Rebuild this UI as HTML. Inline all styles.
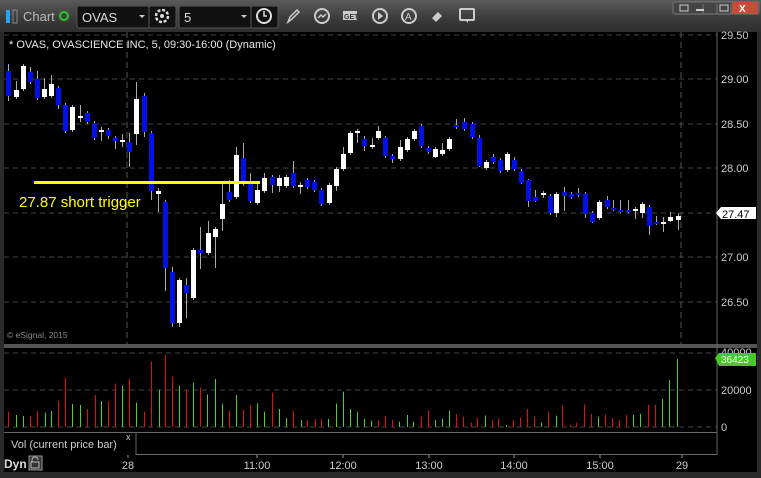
<!DOCTYPE html>
<html><head><meta charset="utf-8"><style>
html,body{margin:0;padding:0;background:#1a1a1a;}
body{width:761px;height:478px;overflow:hidden;position:relative;font-family:"Liberation Sans",Arial,sans-serif;}
.tb{position:absolute;left:0;top:0;width:761px;height:32px;background:linear-gradient(#5a5a5a,#3a3a3a 60%,#2e2e2e);}
</style></head><body>
<div class="tb"></div>
<svg width="761" height="478" style="position:absolute;left:0;top:0" id="s">
<rect x="6" y="10" width="4" height="13" fill="#29a3f0"/>
<rect x="13" y="10" width="4" height="13" fill="none" stroke="#888" stroke-width="1"/>
<text x="23" y="21" fill="#bbb" font-size="13" font-family="Liberation Sans">Chart</text>
<circle cx="64" cy="16" r="4" fill="none" stroke="#2c2" stroke-width="2"/>
<rect x="77" y="6" width="72" height="22" rx="2" fill="#111" stroke="#555"/>
<text x="82" y="22" fill="#ddd" font-size="13" font-family="Liberation Sans">OVAS</text>
<path d="M139 15l3 3 3-3z" fill="#ccc"/>
<rect x="149" y="6" width="27" height="22" rx="2" fill="#111" stroke="#555"/>
<circle cx="162" cy="16" r="6" fill="none" stroke="#ddd" stroke-width="2.5" stroke-dasharray="3 1.7"/>
<circle cx="162" cy="16" r="2" fill="#ddd"/>
<rect x="179" y="6" width="72" height="22" rx="2" fill="#111" stroke="#555"/>
<text x="184" y="22" fill="#ddd" font-size="13" font-family="Liberation Sans">5</text>
<path d="M241 15l3 3 3-3z" fill="#ccc"/>
<rect x="251" y="6" width="27" height="22" rx="2" fill="#111" stroke="#555"/>
<circle cx="264" cy="16" r="7" fill="none" stroke="#ddd" stroke-width="2"/>
<path d="M264 11v5h3" stroke="#ddd" stroke-width="1.5" fill="none"/>
<path d="M288 22l2-5 7-7 2 2-7 7z" fill="none" stroke="#ccc" stroke-width="1.5"/>
<circle cx="322" cy="16" r="7" fill="none" stroke="#ccc" stroke-width="2"/>
<path d="M318 18l3-3 2 2 3-3" stroke="#ccc" stroke-width="1.5" fill="none"/>
<rect x="343" y="11" width="14" height="9" fill="#ccc"/><text x="344" y="19" font-size="7" fill="#333" font-weight="bold">GET</text>
<circle cx="380" cy="16" r="7" fill="none" stroke="#ccc" stroke-width="2"/><path d="M378 12l5 4-5 4z" fill="#ccc"/>
<circle cx="409" cy="16" r="7" fill="none" stroke="#ccc" stroke-width="2"/><text x="405" y="20" font-size="10" fill="#ccc">A</text>
<path d="M432 18l6-6 4 4-6 6z" fill="#ccc"/>
<rect x="460" y="9" width="14" height="11" rx="1" fill="none" stroke="#ccc" stroke-width="2"/><path d="M465 20l3 3v-3" fill="#ccc"/>
<rect x="673" y="2" width="86" height="12" rx="2" fill="#444" stroke="#777"/>
<rect x="732" y="2" width="26" height="12" fill="#c0503a"/>
<text x="739" y="12" font-size="10" fill="#fff" font-weight="bold">X</text>
<path d="M703 4v10M717 4v10M731 4v10" stroke="#777"/>
<rect x="680" y="5" width="8" height="6" fill="none" stroke="#ccc"/><path d="M696 10h8" stroke="#ccc" stroke-width="2"/><rect x="720" y="5" width="8" height="6" fill="none" stroke="#ccc"/>
<rect x="4" y="32" width="753" height="312" fill="#000"/>
<rect x="0" y="32" width="4" height="446" fill="#2a2a2a"/>
<rect x="757" y="32" width="4" height="446" fill="#2a2a2a"/>
<rect x="4" y="344" width="753" height="4" fill="#555"/>
<rect x="4" y="348" width="753" height="124" fill="#000"/>
<rect x="0" y="472" width="761" height="6" fill="#2a2a2a"/>
<line x1="717" y1="32" x2="717" y2="455" stroke="#666"/>
<g stroke="#444" stroke-dasharray="5 4">
<line x1="4" y1="35" x2="717" y2="35"/><line x1="4" y1="79" x2="717" y2="79"/><line x1="4" y1="124" x2="717" y2="124"/><line x1="4" y1="168" x2="717" y2="168"/><line x1="4" y1="213" x2="717" y2="213"/><line x1="4" y1="257" x2="717" y2="257"/><line x1="4" y1="302" x2="717" y2="302"/>
<line x1="4" y1="353" x2="717" y2="353"/><line x1="4" y1="390" x2="717" y2="390"/><line x1="4" y1="427" x2="717" y2="427"/>
</g>
<g stroke="#555" stroke-dasharray="6 4"><line x1="127" y1="32" x2="127" y2="344"/><line x1="681" y1="32" x2="681" y2="344"/></g>
<g id="c"></g>
<g id="v"></g>
<rect x="34" y="181" width="226" height="3" fill="#ffff00"/>
<g font-size="11" fill="#ccc" font-family="Liberation Sans">
<text x="721" y="39">29.50</text><text x="721" y="83">29.00</text><text x="721" y="128">28.50</text><text x="721" y="172">28.00</text><text x="721" y="261">27.00</text><text x="721" y="306">26.50</text>
<text x="721" y="356">40000</text><text x="721" y="394">20000</text><text x="721" y="431">0</text>
</g>
<path d="M716 213l5-6h35v12h-35z" fill="#fff"/>
<text x="722" y="218" font-size="11" fill="#000" font-family="Liberation Sans">27.47</text>
<path d="M715 358l4-5h37v13h-37z" fill="#44cc22"/>
<text x="721" y="363" font-size="10" fill="#fff" font-family="Liberation Sans">36423</text>
<text x="9" y="48" font-size="11" fill="#e8e8e8" font-family="Liberation Sans">* OVAS, OVASCIENCE INC, 5, 09:30-16:00 (Dynamic)</text>
<text x="19" y="207" font-size="15" fill="#ffff00" font-family="Liberation Sans">27.87 short trigger</text>
<text x="7" y="338" font-size="8.5" fill="#888" font-family="Liberation Sans">© eSignal, 2015</text>
<rect x="4" y="432" width="713" height="23" fill="#000"/>
<line x1="4" y1="432.5" x2="717" y2="432.5" stroke="#666"/>
<rect x="136" y="432.5" width="581" height="22" fill="#000" stroke="#666"/>
<text x="11" y="448" font-size="11" fill="#ccc" font-family="Liberation Sans">Vol (current price bar)</text>
<text x="126" y="440" font-size="9" fill="#ccc" font-family="Liberation Sans">x</text>
<text x="4" y="468" font-size="12" fill="#ddd" font-weight="bold" font-family="Liberation Sans">Dyn</text>
<rect x="29" y="456" width="13" height="14" fill="#333" stroke="#999"/>
<path d="M32 462v-2a3 3 0 016 0M31 462h8v6h-8z" stroke="#bbb" fill="none"/>
<g font-size="11" fill="#ccc" font-family="Liberation Sans" text-anchor="middle">
<text x="128" y="469">28</text><text x="257" y="469">11:00</text><text x="343" y="469">12:00</text><text x="429" y="469">13:00</text><text x="514" y="469">14:00</text><text x="600" y="469">15:00</text><text x="682" y="469">29</text>
</g>
<path d="M128 455v3M257 455v3M343 455v3M429 455v3M514 455v3M600 455v3M682 455v3" stroke="#999"/>
</svg>
<script>
var C=[[8,'b',71,96,64,101],[16,'w',90,97,81,99],[23,'w',66,89],[30,'b',72,82,67,84],[37,'b',79,98,71],[44,'w',89,97,78],[51,'w',84,96,75],[58,'b',88,105,86,109],[65,'b',105,131],[72,'w',107,130],[80,'w',116,118,105,122],[87,'b',113,122],[94,'b',123,138,0,140],[101,'w',130,132,127,141],[108,'b',130,136,0,139],[115,'b',138,141,136,149],[122,'w',140,142,134,147],[129,'b',142,152,133,167],[136,'w',99,134,82,145],[144,'b',96,132,93,137],[151,'b',133,191,131,200],[158,'w',191,194,188,212],[165,'b',202,268,0,291],[172,'b',272,323,267,327],[179,'w',280,323,0,327],[186,'b',285,293,278,318],[193,'w',250,298],[200,'b',250,253,227,269],[208,'w',233,253,221],[215,'w',229,237,0,268],[222,'w',204,219,183,231],[229,'b',192,200,180],[236,'w',155,197,147],[243,'b',158,184,143],[250,'b',184,201,173],[257,'w',190,203,182],[264,'w',178,191,173,193],[272,'b',177,185,0,193],[279,'w',178,186,175,192],[286,'w',177,186],[293,'b',173,186,161],[300,'w',185,187,182,194],[307,'b',180,187],[314,'b',182,190],[321,'b',190,204],[329,'w',185,203],[336,'w',169,186,0,191],[343,'w',154,169,147],[350,'w',133,153,131],[357,'w',131,133,0,143],[364,'b',139,146,136,151],[372,'w',145,147,138,149],[378,'w',131,138,126],[385,'b',138,156],[392,'b',156,159,0,163],[400,'w',147,159,140],[407,'w',139,150,137,152],[414,'w',131,139],[421,'b',126,146,0,148],[428,'b',148,152,0,154],[435,'w',149,157,0,158],[442,'w',150,154,143,156],[449,'w',139,149,137],[456,'b',125,127,119],[464,'b',122,129,118],[472,'b',124,137],[479,'b',138,166,135,167],[486,'w',162,168,0,170],[493,'b',157,162,154,164],[500,'b',160,171,0,173],[507,'w',154,170],[514,'b',160,169,157],[521,'b',171,183,0,184],[528,'b',180,201,179,207],[535,'b',197,201,190,202],[543,'w',193,195,0,198],[550,'b',196,213],[556,'w',194,213,0,217],[564,'b',192,196,187,211],[571,'b',194,197],[578,'b',193,195,188],[585,'b',194,214,0,218],[592,'b',213,222,0,223],[599,'w',202,218],[607,'b',200,207,196,209],[613,'b',208,209,200],[620,'b',210,211,200],[628,'b',210,211,200],[635,'w',209,211,0,219],[642,'w',204,213,0,218],[649,'b',207,226,0,235],[656,'b',222,223,216],[663,'w',222,223,217,232],[670,'w',217,221,212,222],[678,'w',216,220,213,230]];
var h='';C.forEach(function(c){var x=c[0],t=Math.min(c[2],c[3]),b=Math.max(c[2],c[3]),hi=c[4]||t-2,lo=c[5]||b+2;var col=c[1]=='b'?'#0010e6':'#fff';
h+='<line x1="'+(x+.5)+'" y1="'+hi+'" x2="'+(x+.5)+'" y2="'+lo+'" stroke="#aaa"/>';h+='<rect x="'+(x-2)+'" y="'+t+'" width="5" height="'+Math.max(2,b-t)+'" fill="'+col+'"/>';});
document.getElementById('c').innerHTML=h;
var V='17r215 34g225 48g228 62r228 77r213 92g218 106g213 120r183 135r113 149g192 165g195 180r207 195r165 209g183 223r183 238r131 252g137 267r117 281g188 298r215 312r65 327g150 341r45 355r110 370g137 384r150 399g128 413r143 428g163 443g117 458g191 472r212 487g165 501r209 516r197 530g190 545g215 561r158 576g207 590g234 605r213 620g240 634r240 649r237 663r237 677g237 693g191 708g155 722g207 737g215 751g237 766g242 780r240 795r228 809r240 824g245 839g225 853g245 868r230 882r212 897g240 912g237 926g212 941r222 955r230 971r248 985r232 1000g227 1014r240 1028r236 1043g255 1058r240 1072r233 1087r207 1101r230 1116g248 1131r215 1146g227 1160r197 1175r255 1189r248 1204r193 1219r222 1234g230 1248r224 1263r233 1277r240 1292r225 1306g225 1321g222 1336r195 1351r195 1366g177 1381g120 1396g57'.split(' ');
var g='';V.forEach(function(s){var m=s.match(/(\d+)([rg])(\d+)/);var x=Math.round(+m[1]/2.063)+.5,y=+m[3]/3+340;g+='<line x1="'+x+'" y1="'+y+'" x2="'+x+'" y2="427" stroke="'+(m[2]=='r'?'#e01010':'#50d020')+'"/>';});
document.getElementById('v').innerHTML=g;
</script>
</body></html>
